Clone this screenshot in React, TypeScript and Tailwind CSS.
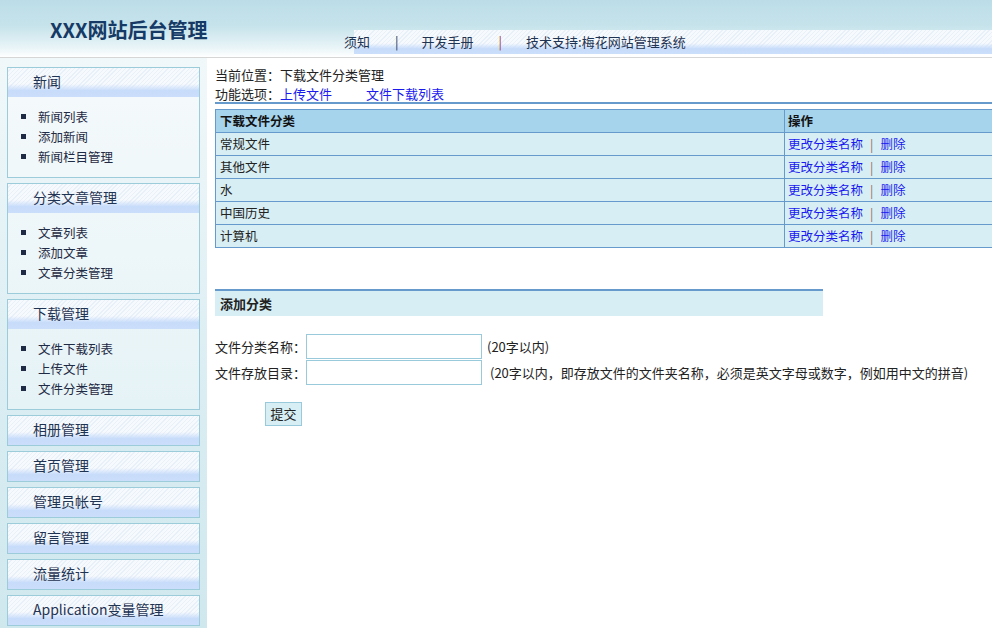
import React from "react";

const stripe =
  "bg-[linear-gradient(to_bottom,rgba(255,255,255,0)_0%,rgba(255,255,255,0)_55%,#c7dcfa_78%,#cbdffb_100%),repeating-linear-gradient(135deg,#f7fafd_0px,#f7fafd_2px,#e8f0f9_2px,#e8f0f9_3px)]";

function PanelHeader({ title }: { title: string }) {
  return (
    <div className={`h-[29px] flex items-center pl-[25px] pb-[2px] text-[14px] text-[#1f3352] ${stripe}`}>
      {title}
    </div>
  );
}

function Panel({ title, items }: { title: string; items?: string[] }) {
  return (
    <div className="border border-[#9ccbd9] bg-[rgba(255,255,255,0.35)]">
      <PanelHeader title={title} />
      {items && (
        <ul className="pt-[10px] pb-[10px] pl-[30px] list-[square] text-[12.5px] text-[#1f2a44]">
          {items.map((it) => (
            <li key={it} className="h-[20px] leading-[20px]">
              {it}
            </li>
          ))}
        </ul>
      )}
    </div>
  );
}

const rows = ["常规文件", "其他文件", "水", "中国历史", "计算机"];

export default function App() {
  return (
    <div className="w-[992px] h-[628px] overflow-hidden bg-white text-[13px] text-[#222] font-['Noto_Sans_CJK_SC','Noto_Sans',sans-serif]">
      {/* header */}
      <div className="h-[57px] flex bg-[linear-gradient(to_bottom,#bcdde8_0%,#c6e3eb_45%,#eaf5f8_85%,#ffffff_100%)]">
        <div className="w-[354px] pl-[50px] pt-[16px] text-[20px] font-bold text-[#163a66] leading-[28px]">
          XXX网站后台管理
        </div>
        <div className="flex-1 flex flex-col">
          <div className="h-[30px]" />
          <div className={`h-[24px] flex items-center ${stripe}`}>
            <div className="flex items-center ml-[-10px] text-[13px] text-[#1f3352]">
              <span>须知</span>
              <span className="ml-[25px] text-[#1c2f55]">|</span>
              <span className="ml-[23px]">开发手册</span>
              <span className="ml-[25px] text-[#a03a3a]">|</span>
              <span className="ml-[24px]">技术支持:梅花网站管理系统</span>
            </div>
          </div>
          <div className="h-[3px] bg-white" />
        </div>
      </div>
      <div className="h-[1px] bg-[#d6d6d6]" />

      <div className="flex h-[570px]">
        {/* sidebar */}
        <div className="w-[207px] shrink-0 px-[7px] pt-[9px] flex flex-col gap-[5px] bg-[linear-gradient(to_bottom,#f1f8fa_0%,#d9edf2_60%,#cfe8ee_100%)]">
          <Panel title="新闻" items={["新闻列表", "添加新闻", "新闻栏目管理"]} />
          <Panel title="分类文章管理" items={["文章列表", "添加文章", "文章分类管理"]} />
          <Panel title="下载管理" items={["文件下载列表", "上传文件", "文件分类管理"]} />
          <Panel title="相册管理" />
          <Panel title="首页管理" />
          <Panel title="管理员帐号" />
          <Panel title="留言管理" />
          <Panel title="流量统计" />
          <Panel title="Application变量管理" />
        </div>

        {/* main */}
        <div className="flex-1 pl-[8px] pt-[7px] min-w-0">
          <div className="leading-[19px] text-[#222]">
            <div>当前位置：下载文件分类管理</div>
            <div className="flex">
              <span>功能选项：</span>
              <span className="text-[#1a1aee]">上传文件</span>
              <span className="ml-[34px] text-[#1a1aee]">文件下载列表</span>
            </div>
          </div>
          <div className="mt-[-1px] h-[2px] bg-[#6699cc] w-[790px]" />
          <table className="mt-[5px] w-[790px] table-fixed border-collapse text-[12.5px]">
            <colgroup>
              <col className="w-[569px]" />
              <col />
            </colgroup>
            <thead>
              <tr className="bg-[#a6d4ec] h-[23px]">
                <th className="border border-[#6699cc] text-left font-bold px-[4px] text-[#111]">下载文件分类</th>
                <th className="border border-[#6699cc] text-left font-bold px-[3px] text-[#111]">操作</th>
              </tr>
            </thead>
            <tbody>
              {rows.map((r) => (
                <tr key={r} className="bg-[#d7eff4] h-[23px]">
                  <td className="border border-[#6699cc] px-[4px] text-[#222]">{r}</td>
                  <td className="border border-[#6699cc] px-[3px]">
                    <span className="text-[#1a1aee]">更改分类名称</span>
                    <span className="mx-[7px] text-[#996666]">|</span>
                    <span className="text-[#1a1aee]">删除</span>
                  </td>
                </tr>
              ))}
            </tbody>
          </table>

          <div className="mt-[41px] w-[608px] h-[27px] border-t-2 border-[#6699cc] bg-[#d7eff4] flex items-center pl-[5px] font-bold text-[#222]">
            添加分类
          </div>

          <div className="mt-[18px] flex flex-col gap-[1px]">
            <div className="flex items-center h-[25px]">
              <span className="w-[91px]">文件分类名称：</span>
              <div className="w-[176px] h-[25px] border border-[#98cadb] bg-white" />
              <span className="ml-[5px]">(20字以内)</span>
            </div>
            <div className="flex items-center h-[25px]">
              <span className="w-[91px]">文件存放目录：</span>
              <div className="w-[176px] h-[25px] border border-[#98cadb] bg-white" />
              <span className="ml-[8px] whitespace-nowrap">(20字以内，即存放文件的文件夹名称，必须是英文字母或数字，例如用中文的拼音)</span>
            </div>
          </div>

          <button className="mt-[17px] ml-[50px] w-[37px] h-[24px] border border-[#98cadb] bg-[#d7eff4] text-[13px] text-[#222] flex items-center justify-center">
            提交
          </button>
        </div>
      </div>
    </div>
  );
}
